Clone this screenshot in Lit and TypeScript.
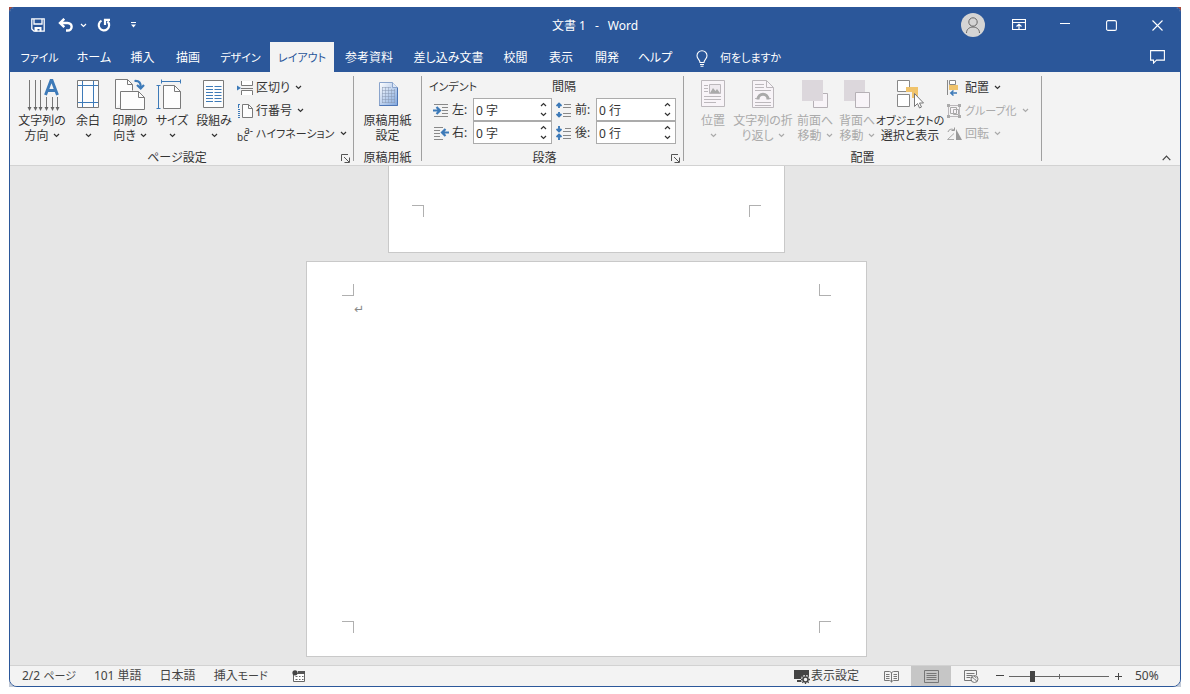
import { LitElement, html, css, svg, nothing, TemplateResult } from "lit";
import { customElement, property } from "lit/decorators.js";
import { classMap } from "lit/directives/class-map.js";

const chevron = html`<svg class="chev" width="7" height="5" viewBox="0 0 7 5" aria-hidden="true">
  <path d="M1 1 3.500 3.500 6 1" fill="none" stroke="currentColor" stroke-width="1.200" /></svg>`;

const PAPER = "#fdfdfd";
const LINE = "#7a7a7a";
const BLUE = "#3d7ab8";
const DIM = "#bcb8bc";

const large: Record<string, unknown> = {
  direction: svg`
    <g stroke="#777" fill="none"><path d="M3.500 1v29M9.500 1v29M14.500 1v29M20.500 18v12M26.500 18v12M31.500 18v12" /></g>
    <g fill="#666"><path d="M1.500 28h4l-2 4zM7.500 28h4l-2 4zM12.500 28h4l-2 4zM18.500 28h4l-2 4zM24.500 28h4l-2 4zM29.500 28h4l-2 4z" /></g>
    <path d="M19.500 16 25 1.500h1L31.500 16M21.800 11.500h7.500" fill="none" stroke="${BLUE}" stroke-width="2.900" />`,
  margins: svg`
    <path d="M5.500 1.500h21v27h-21z" fill="${PAPER}" stroke="${LINE}" />
    <path d="M10.500 2v26M21.500 2v26M6 6.500h20M6 23.500h20" stroke="${BLUE}" fill="none" />`,
  orientation: svg`
    <path d="M1.500 29.500V.5h12l5 5v6M1.500 29.500h5" fill="${PAPER}" stroke="${LINE}" />
    <path d="M13.500.5v5h5" fill="none" stroke="${LINE}" />
    <path d="M6.500 12.500h18l6 6v12h-24z" fill="${PAPER}" stroke="${LINE}" />
    <path d="M24.500 12.500v6h6" fill="none" stroke="${LINE}" />
    <path d="M20.500 2c5-.5 6.500 2.500 6.200 6.500M23 6l3.700 3.500L30 6" fill="none" stroke="${BLUE}" stroke-width="2.200" />`,
  size: svg`
    <path d="M5 2.500h20M5.500.5v4M24.500.5v4M2.500 6v24M.5 6.500h4M.5 29.500h4" stroke="${BLUE}" fill="none" />
    <path d="M7.500 6.500h11l6 6v17h-17z" fill="${PAPER}" stroke="${LINE}" />
    <path d="M18.500 6.500v6h6" fill="none" stroke="${LINE}" />`,
  columns: svg`
    <path d="M5.500 1.500h20v27h-20z" fill="${PAPER}" stroke="${LINE}" />
    <path d="M8 7.500h7M8 10.500h7M8 13.500h7M8 16.500h7M8 19.500h7M8 22.500h7M16.500 7.500h7M16.500 10.500h7M16.500 13.500h7M16.500 16.500h7M16.500 19.500h7M16.500 22.500h7" stroke="${BLUE}" />`,
  genko: svg`
    <defs><linearGradient id="g" x1="0" y1="0" x2="1" y2="1"><stop offset="0" stop-color="#fff" /><stop offset="1" stop-color="#7fa5dc" /></linearGradient></defs>
    <path d="M7.500 3.500h13l5 5v18h-18z" fill="url(#g)" stroke="#8aa4cc" />
    <path d="M25.500 8.500v18h-18" fill="none" stroke="#4d75b5" />
    <path d="M20.500 3.500v5h5" fill="#dfe9f7" stroke="#8aa4cc" />
    <path d="M10 8.500h9M10 11.500h13M10 14.500h13M10 17.500h13M10 20.500h13M10 23.500h13M10.500 8v16M13.500 8v16M16.500 8v16M19.500 10v14M22.500 10v14" stroke="#8797b0" stroke-width=".5" />`,
  position: svg`
    <path d="M4.500 1.500h23v26h-23z" fill="#f8f4f8" stroke="${DIM}" />
    <path d="M12.500 5.500h11v9h-11z" fill="#efeaef" stroke="${DIM}" />
    <path d="m13 14 3-5 2.500 3L20 10l3 4z" fill="#aaa" />
    <path d="M7 6.500h4M7 9.500h4M7 12.500h4M7 17.500h17M7 20.500h17M7 23.500h12" stroke="${DIM}" />`,
  wrap: svg`
    <path d="M5.500 1.500h14l7 7v20h-21z" fill="#f8f4f8" stroke="${DIM}" />
    <path d="M19.500 1.500v7h7" fill="none" stroke="${DIM}" />
    <path d="M8 5.500h9M8 8.500h9M8 11.500h16M8 23.500h16M8 26.500h16M8 19.500h2M22 19.500h2" stroke="${DIM}" />
    <path d="M11 20.500c0-7 10-7 10 0" fill="none" stroke="#aaa" stroke-width="3" />`,
  forward: svg`
    <path d="M14.500 14.500h14v14h-14z" fill="#f8f4f8" stroke="#b5b0b5" />
    <path d="M3 1h21v21H3z" fill="#dcd7dc" />`,
  backward: svg`
    <path d="M3 1h21v21H3z" fill="#dcd7dc" />
    <path d="M14.500 13.500h14v15h-14z" fill="#f8f4f8" stroke="#b5b0b5" />`,
  select: svg`
    <path d="M3.500 1.500h12v11h-12zM3.500 15.500h12v12h-12z" fill="#fff" stroke="#888" />
    <path d="M12 8h12v11h-6v-6h-6z" fill="#f0c36b" />
    <path d="M20.500 14.500v13l3-3 2 4.500 2-1-2-4h4z" fill="#fff" stroke="#777" />`,
};

const small: Record<string, unknown> = {
  breaks: svg`<path d="M4.500 1v4.500h11V1M4.500 15v-4.500h11V15" fill="#fff" stroke="${LINE}" /><path d="M4 8.500h12" stroke="${LINE}" /><path d="M0 5.500 4 8 0 10.500z" fill="${BLUE}" />`,
  lines: svg`<path d="M5.500 1.500h6l4 4v9h-10z" fill="${PAPER}" stroke="${LINE}" /><path d="M11.500 1.500v4h4" fill="none" stroke="${LINE}" /><path d="M1 1.500h2M1.500 2v3M1 6.500h2M1 8.500h2M1 10.500h2M1 12.500h2M1 14.500h2" stroke="${BLUE}" />`,
  align: svg`<path d="M1.500 0v15" stroke="#888" /><path d="M3.500.5h6v4h-6z" fill="#fff" stroke="#888" /><path d="M3 5h9v5H3z" fill="#f0c36b" /><path d="M11 13h-6M7.500 10.500 4.800 13l2.700 2.500" fill="none" stroke="${BLUE}" stroke-width="1.500" />`,
  group: svg`<path d="M2.500 2.500h11v11h-11z" fill="none" stroke="${DIM}" /><path d="M4.500 4.500h6v6h-6zM7.500 6.500h5v5h-5z" fill="#f8f4f8" stroke="#aaa" /><path d="M1 1h3v3H1zM12 1h3v3h-3zM1 12h3v3H1zM12 12h3v3h-3z" fill="#aaa" />`,
  rotate: svg`<path d="M8 13.500H1.500L8 7.500" fill="none" stroke="#aaa" /><path d="M10 3v11h6z" fill="#999" /><path d="M2 6c1-3 4-3.500 6-2M8.500 1.500v3h-3" fill="none" stroke="#999" />`,
  indentLeft: svg`<path d="M1 2.500h14M9 5.500h6M9 8.500h6M9 11.500h6M1 14.500h14" stroke="#888" /><path d="M0 8.500h6M3.500 5l3.500 3.500L3.500 12" fill="none" stroke="${BLUE}" stroke-width="2.200" />`,
  indentRight: svg`<path d="M1 2.500h9M1 5.500h6M1 8.500h6M1 11.500h6M1 14.500h9" stroke="#888" /><path d="M16 7.500h-6M12.500 4 9 7.500l3.500 3.500" fill="none" stroke="${BLUE}" stroke-width="2.200" />`,
  before: svg`<path d="M8 2.500h7M7 5.500h8M7 11.500h8M7 14.500h8" stroke="#888" /><path d="M3 1v5M3 10v5M.5 4 3 1.500 5.500 4M.5 12 3 14.500 5.500 12" fill="none" stroke="${BLUE}" stroke-width="1.900" />`,
  after: svg`<path d="M9 3.500h6M7 6.500h8M7 10.500h8M7 13.500h8" stroke="#888" /><path d="M3 1v5M3 10v5M.5 4 3 6.500 5.500 4M.5 12 3 9.500 5.500 12" fill="none" stroke="${BLUE}" stroke-width="1.900" />`,
};

const bigIcon = (name: string) => html`<svg class="big" width="32" height="32" viewBox="0 0 32 32" overflow="visible" aria-hidden="true">${large[name]}</svg>`;
const smallIcon = (name: string) => html`<svg class="small" width="16" height="16" viewBox="0 0 16 16" aria-hidden="true">${small[name]}</svg>`;

/* Long runs of kana are set one size down so that they stay compact. */
const isKana = (text: string) => /[\u3040-\u30ff]{4}/.test(text);
const label = (text: string) => html`<span class=${classMap({ label: true, kana: isKana(text) })}>${text}</span>`;

const shared = css`
  * { box-sizing: border-box; }
  button, input {
    font: inherit; font-feature-settings: inherit; color: inherit;
    border: 0; background: none; padding: 0; margin: 0; border-radius: 0;
  }
  svg { display: block; flex: none; }
  .kana { font-size: 11px; }
`;

/* Large ribbon command: icon above one or two lines of text. */
@customElement("ribbon-button")
export class RibbonButton extends LitElement {
  static styles = [shared, css`
    :host { display: block; flex: none; }
    :host([size="medium"]) { width: 42px; }
    :host([size="wide"]) { width: 50px; }
    :host([size="widest"]) { width: 64px; }
    button { display: flex; flex-direction: column; align-items: center; width: 100%; padding-top: 3px; }
    .big { margin-bottom: 2px; }
    .line { display: flex; align-items: center; justify-content: center; gap: 4px; height: 15px; line-height: 15px; white-space: nowrap; }
    button:disabled { color: #aaa; }
  `];
  @property() icon = "";
  @property() first = "";
  @property() second = "";
  @property({ type: Boolean }) menu = false;
  @property({ type: Boolean }) disabled = false;

  render() {
    return html`<button ?disabled=${this.disabled}>
      ${bigIcon(this.icon)}
      <span class="line">${label(this.first)}</span>
      <span class="line">${this.second ? label(this.second) : nothing}${this.menu ? chevron : nothing}</span>
    </button>`;
  }
}

/* Titled section of the ribbon. */
@customElement("ribbon-group")
export class RibbonGroup extends LitElement {
  static styles = [shared, css`
    :host { display: flex; flex-direction: column; flex: none; height: 89px; }
    .body { flex: 1; display: flex; align-items: flex-start; min-height: 0; }
    .foot { display: flex; height: 14px; line-height: 14px; }
    .title { flex: 1; text-align: center; white-space: nowrap; }
    .launch { width: 16px; display: grid; place-items: center; }
  `];
  @property() label = "";
  @property({ type: Boolean }) launcher = false;

  render() {
    return html`
      <div class="body"><slot></slot></div>
      <div class="foot">
        <span class="title">${this.label}</span>
        ${this.launcher ? html`<button class="launch" aria-label="${this.label}の詳細">
          <svg width="9" height="9" viewBox="0 0 9 9"><path d="M.5 7V.5H7M3 3l5 5M8.500 3.500v5h-5" fill="none" stroke="#555" /></svg>
        </button>` : nothing}
      </div>`;
  }
}

const tabs = ["ファイル", "ホーム", "挿入", "描画", "デザイン", "レイアウト", "参考資料", "差し込み文書", "校閲", "表示", "開発", "ヘルプ"];

@customElement("app-root")
export class AppRoot extends LitElement {
  static styles = [shared, css`
    :host {
      display: block; height: 100vh; padding: 7px 9px; background: #fff; color: #333;
      box-sizing: border-box; overflow: hidden;
      font: 12px/16px "Noto Sans", "Noto Sans CJK JP", sans-serif;
      font-feature-settings: "palt";
    }
    .backdrop { height: 100%; background: linear-gradient(#a8483c 50%, #c3cbd8 50%); }
    .window {
      height: 100%; display: flex; flex-direction: column; overflow: hidden;
      border: 1px solid #2b579a; border-radius: 5px 5px 8px 8px; background: #e6e6e6;
    }

    .titlebar { display: grid; grid-template-columns: 1fr auto 1fr; align-items: center; height: 34px; flex: none; background: #2b579a; color: #fff; }
    .quick { display: flex; align-items: center; padding-left: 20px; }
    .quick button { display: grid; place-items: center; height: 24px; }
    .tool { width: 16px; }
    .undo { margin-left: 12px; }
    .narrow { width: 18px; }
    .redo { margin-left: 4px; }
    .more { margin-left: 12px; }
    .title { display: flex; gap: 9px; padding-top: 2px; }
    .system { display: flex; justify-content: flex-end; align-items: center; }
    .system button { display: grid; place-items: center; width: 46px; height: 32px; }
    .system .avatar { width: 24px; height: 24px; margin-right: 11px; border-radius: 50%; background: #d4d4d4; overflow: hidden; }

    .tabs { display: flex; height: 30px; flex: none; background: #2b579a; color: #fff; }
    .tablist { display: grid; grid-template-columns: 57px 52px 45px 46px 59px 64px 70px 89px 45px 46px 46px 50px; padding-left: 1px; }
    .tab { text-align: center; white-space: nowrap; padding-top: 2px; }
    .tab.active { background: #f3f3f3; color: #2b579a; }
    .tell { display: flex; align-items: center; gap: 12px; margin-left: 16px; padding-top: 2px; }
    .comment { margin-left: auto; width: 46px; display: grid; place-items: center; }

    .ribbon { display: flex; flex: none; height: 94px; padding-top: 4px; background: #f3f3f3; border-bottom: 1px solid #d2d2d2; }
    .sep { width: 1px; flex: none; height: 85px; background: #a0a0a0; }
    .setup { width: 343px; padding-left: 7px; }
    .manuscript { width: 67px; }
    .paragraph { width: 261px; }
    .arrange { width: 357px; }
    .manuscript ribbon-button { flex: 1; }
    .inset { padding-left: 10px; display: flex; }
    .slim { width: 38px; }
    .broad { width: 62px; }
    .stack { display: flex; flex-direction: column; padding-left: 2px; }
    .inset .stack { padding-left: 4px; }
    .stack button { display: flex; align-items: center; height: 23px; gap: 3px; white-space: nowrap; }
    .stack .chev { margin-left: 2px; }
    .stack button:disabled { color: #aaa; }
    .bc { width: 16px; display: grid; font-size: 10px; line-height: 8px; text-align: left; }
    .bc .over { text-align: right; line-height: 6px; }
    .fields { display: grid; grid-template-columns: 44px 79px 44px 80px; padding-left: 7px; align-items: center; }
    .heading { grid-column: span 2; height: 22px; line-height: 22px; }
    .field { display: flex; align-items: center; gap: 3px; padding-left: 4px; white-space: nowrap; }
    .spin { display: flex; height: 23px; border: 1px solid #ababab; background: #fff; }
    .spin input { flex: 1; min-width: 0; padding-left: 2px; height: 21px; outline: 0; }
    .arrows { width: 16px; display: grid; grid-template-rows: 1fr 1fr; }
    .arrows button { display: grid; place-items: center; }
    .up svg { transform: rotate(180deg); }
    .collapse { margin-left: auto; align-self: flex-end; width: 28px; height: 14px; display: grid; place-items: center; }

    .canvas {
      flex: 1; min-height: 0; overflow: hidden; display: flex; flex-direction: column; justify-content: flex-end;
      align-items: center; gap: 8px; padding: 0 17px 8px 0; background: #e6e6e6;
    }
    .page { flex: none; display: grid; grid-template: 12px 1fr 12px / 12px 1fr 12px; background: #fff; border: 1px solid #c9c9c9; }
    .portrait { width: 397px; height: 561px; padding: 35px 23px; }
    .landscape { width: 561px; height: 396px; padding: 22px 35px 23px; }
    .mark { border: 0 solid #b0b0b0; }
    .mark.tl { border-width: 0 1px 1px 0; }
    .mark.tr { border-width: 0 0 1px 1px; grid-column: 3; }
    .mark.bl { border-width: 1px 1px 0 0; grid-row: 3; }
    .mark.br { border-width: 1px 0 0 1px; grid-column: 3; grid-row: 3; }
    .text { grid-column: 2; grid-row: 2; margin: 0; padding-top: 5px; color: #888; font: 12px/16px "DejaVu Sans", sans-serif; }

    .status { display: flex; align-items: center; flex: none; height: 21px; border-top: 1px solid #d2d2d2; background: #f3f3f3; padding-left: 12px; color: #444; }
    .info { display: flex; align-items: center; gap: 18px; white-space: nowrap; }
    .info svg { margin-left: 6px; }
    .view { display: flex; align-items: center; margin-left: auto; height: 100%; }
    .display { display: flex; align-items: center; gap: 1px; margin-right: 12px; }
    .mode { width: 40px; height: 100%; display: grid; place-items: center; }
    .mode.on { background: #c6c6c6; }
    .step { width: 18px; height: 100%; display: grid; place-items: center; }
    .zoom {
      appearance: none; width: 100px; height: 16px; 
      background: linear-gradient(#666, #666) center / 1px 5px no-repeat, linear-gradient(#666, #666) center / 100% 1px no-repeat;
    }
    .zoom::-webkit-slider-thumb { appearance: none; width: 5px; height: 11px; background: #444; }
    .percent { width: 53px; padding-left: 8px; }
  `];

  private spinner(id: string, value: string) {
    return html`<span class="spin">
      <input id=${id} type="text" .value=${value} />
      <span class="arrows">
        <button class="up" aria-label="増やす">${chevron}</button>
        <button aria-label="減らす">${chevron}</button>
      </span>
    </span>`;
  }

  private field(id: string, icon: string, text: string, value: string) {
    return html`<label class="field" for=${id}>${smallIcon(icon)}${text}</label>${this.spinner(id, value)}`;
  }

  private command(icon: TemplateResult, text: string, disabled = false) {
    return html`<button ?disabled=${disabled}>${icon}${label(text)}${chevron}</button>`;
  }

  private marks(top: boolean) {
    return html`
      ${top ? html`<span class="mark tl"></span><span class="mark tr"></span>` : nothing}
      <span class="mark bl"></span><span class="mark br"></span>`;
  }

  render() {
    return html`<div class="backdrop"><div class="window">
      <header class="titlebar">
        <div class="quick">
          <button class="tool" aria-label="上書き保存"><svg width="14" height="14" viewBox="0 0 14 14"><path d="M.8.8h12.400v12.400H3L.8 11zM3 1v5h8V1" fill="none" stroke="#fff" stroke-width="1.300" /><path d="M3.500 9h7v4.500h-2V11H6.500v2.500h-3z" fill="#fff" /></svg></button>
          <button class="tool undo" aria-label="元に戻す"><svg width="16" height="14" viewBox="0 0 16 14"><path d="M2 5h7.500c5.500 0 5.500 7.500 0 7.500H8M6.300.8 2 5l4.300 4.200" fill="none" stroke="#fff" stroke-width="2.400" /></svg></button>
          <button class="narrow" aria-label="元に戻す一覧">${chevron}</button>
          <button class="tool redo" aria-label="繰り返し"><svg width="14" height="14" viewBox="0 0 14 14"><path d="M4.500 2.600a5.200 5.200 0 1 0 6 .8M8 7V1.800h5" fill="none" stroke="#fff" stroke-width="2.200" /></svg></button>
          <button class="narrow more" aria-label="クイック アクセス"><svg width="5" height="6" viewBox="0 0 5 6"><path d="M0 .5h5" stroke="#fff" /><path d="M0 2.500h5L2.500 5.500z" fill="#fff" /></svg></button>
        </div>
        <div class="title"><span>文書 1</span><span>-</span><span>Word</span></div>
        <div class="system">
          <button class="avatar" aria-label="アカウント"><svg width="24" height="24" viewBox="0 0 24 24"><circle cx="12" cy="9" r="4.200" fill="none" stroke="#666" /><path d="M5.500 20c0-8 13-8 13 0" fill="none" stroke="#666" /></svg></button>
          <button aria-label="リボンの表示オプション"><svg width="14" height="12" viewBox="0 0 14 12"><path d="M.5.500h13v10H.5zM.5 3.500h13M7 10V5.500M4.500 7.500 7 5.200l2.500 2.300" fill="none" stroke="#fff" stroke-width="1.200" /></svg></button>
          <button aria-label="最小化"><svg width="10" height="10" viewBox="0 0 10 10"><path d="M0 3.500h10" stroke="#fff" /></svg></button>
          <button aria-label="最大化"><svg width="11" height="11" viewBox="0 0 11 11"><rect x=".6" y=".6" width="9.800" height="9.800" rx="1.500" fill="none" stroke="#fff" stroke-width="1.100" /></svg></button>
          <button aria-label="閉じる"><svg width="11" height="11" viewBox="0 0 11 11"><path d="m.5.500 10 10M10.500.500l-10 10" stroke="#fff" stroke-width="1.100" /></svg></button>
        </div>
      </header>

      <nav class="tabs">
        <div class="tablist" role="tablist">
          ${tabs.map((t) => html`<button role="tab" aria-selected=${t === "レイアウト"} class=${classMap({ tab: true, active: t === "レイアウト" })}>${label(t)}</button>`)}
        </div>
        <button class="tell">
          <svg width="12" height="17" viewBox="0 0 12 17"><path d="M4 12.500c0-3-3-3.500-3-6.800a5 5 0 0 1 10 0c0 3.300-3 3.800-3 6.800zM4 14.500h4M4.500 16.300h3" fill="none" stroke="#fff" stroke-width="1.100" /></svg>
          ${label("何をしますか")}
        </button>
        <button class="comment" aria-label="コメント"><svg width="15" height="14" viewBox="0 0 15 14"><path d="M.6.600h13.800v9.500H6.500l-3 3v-3H.6z" fill="none" stroke="#fff" stroke-width="1.100" /></svg></button>
      </nav>

      <section class="ribbon">
        <ribbon-group class="setup" label="ページ設定" launcher>
          <ribbon-button size="wide" icon="direction" first="文字列の" second="方向" menu></ribbon-button>
          <ribbon-button size="medium" icon="margins" first="余白" menu></ribbon-button>
          <ribbon-button size="medium" icon="orientation" first="印刷の" second="向き" menu></ribbon-button>
          <ribbon-button size="medium" icon="size" first="サイズ" menu></ribbon-button>
          <ribbon-button size="medium" icon="columns" first="段組み" menu></ribbon-button>
          <div class="stack">
            ${this.command(smallIcon("breaks"), "区切り")}
            ${this.command(smallIcon("lines"), "行番号")}
            ${this.command(html`<span class="bc"><span class="over">a-</span><span>bc</span></span>`, "ハイフネーション")}
          </div>
        </ribbon-group>
        <div class="sep"></div>
        <ribbon-group class="manuscript" label="原稿用紙">
          <ribbon-button icon="genko" first="原稿用紙" second="設定"></ribbon-button>
        </ribbon-group>
        <div class="sep"></div>
        <ribbon-group class="paragraph" label="段落" launcher>
          <div class="fields">
            <span class="heading">${label("インデント")}</span><span class="heading">間隔</span>
            ${this.field("left", "indentLeft", "左:", "0 字")}${this.field("before", "before", "前:", "0 行")}
            ${this.field("right", "indentRight", "右:", "0 字")}${this.field("after", "after", "後:", "0 行")}
          </div>
        </ribbon-group>
        <div class="sep"></div>
        <ribbon-group class="arrange" label="配置">
          <div class="inset">
            <ribbon-button class="slim" icon="position" first="位置" menu disabled></ribbon-button>
            <ribbon-button class="broad" icon="wrap" first="文字列の折" second="り返し" menu disabled></ribbon-button>
            <ribbon-button size="medium" icon="forward" first="前面へ" second="移動" menu disabled></ribbon-button>
            <ribbon-button size="medium" icon="backward" first="背面へ" second="移動" menu disabled></ribbon-button>
            <ribbon-button size="widest" icon="select" first="オブジェクトの" second="選択と表示"></ribbon-button>
            <div class="stack">
              ${this.command(smallIcon("align"), "配置")}
              ${this.command(smallIcon("group"), "グループ化", true)}
              ${this.command(smallIcon("rotate"), "回転", true)}
            </div>
          </div>
        </ribbon-group>
        <div class="sep"></div>
        <button class="collapse" aria-label="リボンを折りたたむ"><svg width="9" height="6" viewBox="0 0 9 6"><path d="M.7 5.200 4.500 1.200 8.300 5.200" fill="none" stroke="#444" stroke-width="1.200" /></svg></button>
      </section>

      <main class="canvas">
        <article class="page portrait">${this.marks(false)}</article>
        <article class="page landscape">${this.marks(true)}<p class="text">↵</p></article>
      </main>

      <footer class="status">
        <div class="info">
          <span>2/2 <span class="kana">ページ</span></span><span>101 単語</span><span>日本語</span><span>挿入<span class="kana">モード</span></span>
          <svg width="13" height="12" viewBox="0 0 13 12"><path d="M1.500 3.500h11v8h-11z" fill="#fff" stroke="#666" /><path d="M6 1h7v3H6z" fill="#555" /><circle cx="3" cy="2.800" r="2.600" fill="#444" /><path d="M3.500 6.500h2M7 6.500h1.500M10 6.500h1.500M3.500 9.500h2M7 9.500h1.500M10 9.500h1.500" stroke="#666" /></svg>
        </div>
        <div class="view">
          <button class="display"><svg width="16" height="15" viewBox="0 0 16 15"><path d="M0 1h15v9H0zM3 11h5v2H3z" fill="#444" /><circle cx="11.500" cy="10.500" r="4.500" fill="#f3f3f3" /><circle cx="11.500" cy="10.500" r="2.500" fill="none" stroke="#444" stroke-width="1.500" /><path d="M11.500 6v1.800M11.500 13.200V15M7 10.500h1.800M14.200 10.500H16M8.300 7.300l1.300 1.300M13.400 12.400l1.300 1.300M14.700 7.300l-1.300 1.300M9.600 12.400l-1.300 1.300" stroke="#444" stroke-width="1.300" /></svg><span>表示設定</span></button>
          <button class="mode" aria-label="閲覧モード"><svg width="15" height="13" viewBox="0 0 15 13"><path d="M.5 1.500h5l2 1 2-1h5v9h-5l-2 1-2-1h-5zM7.500 2.500v10M2 4.500h3.500M2 6.500h3.500M2 8.500h3.500M9.500 4.500H13M9.500 6.500H13M9.500 8.500H13" fill="none" stroke="#777" /></svg></button>
          <button class="mode on" aria-label="印刷レイアウト"><svg width="15" height="13" viewBox="0 0 15 13"><path d="M.5.500h14v12H.5zM2.500 3.500h10M2.500 5.500h10M2.500 7.500h10M2.500 9.500h10" fill="none" stroke="#777" /></svg></button>
          <button class="mode" aria-label="Web レイアウト"><svg width="15" height="13" viewBox="0 0 15 13"><path d="M7 10.500H.5v-10h12V5M2.500 3.500h8M2.500 5.500h6M2.500 7.500h4" fill="none" stroke="#777" /><circle cx="10.500" cy="9" r="3.500" fill="#f3f3f3" stroke="#777" /><path d="M8 7.500c2 0 2 2 3 2s1 1 1.500 2M10 6l2.500 2" fill="none" stroke="#777" /></svg></button>
          <button class="step" aria-label="縮小"><svg width="8" height="8" viewBox="0 0 8 8"><path d="M0 3.500h8" stroke="#444" /></svg></button>
          <input class="zoom" type="range" min="0" max="100" value="22" aria-label="ズーム" />
          <button class="step" aria-label="拡大"><svg width="9" height="9" viewBox="0 0 9 9"><path d="M1 4.500h7M4.500 1v7" stroke="#444" /></svg></button>
          <span class="percent">50%</span>
        </div>
      </footer>
    </div></div>`;
  }
}
